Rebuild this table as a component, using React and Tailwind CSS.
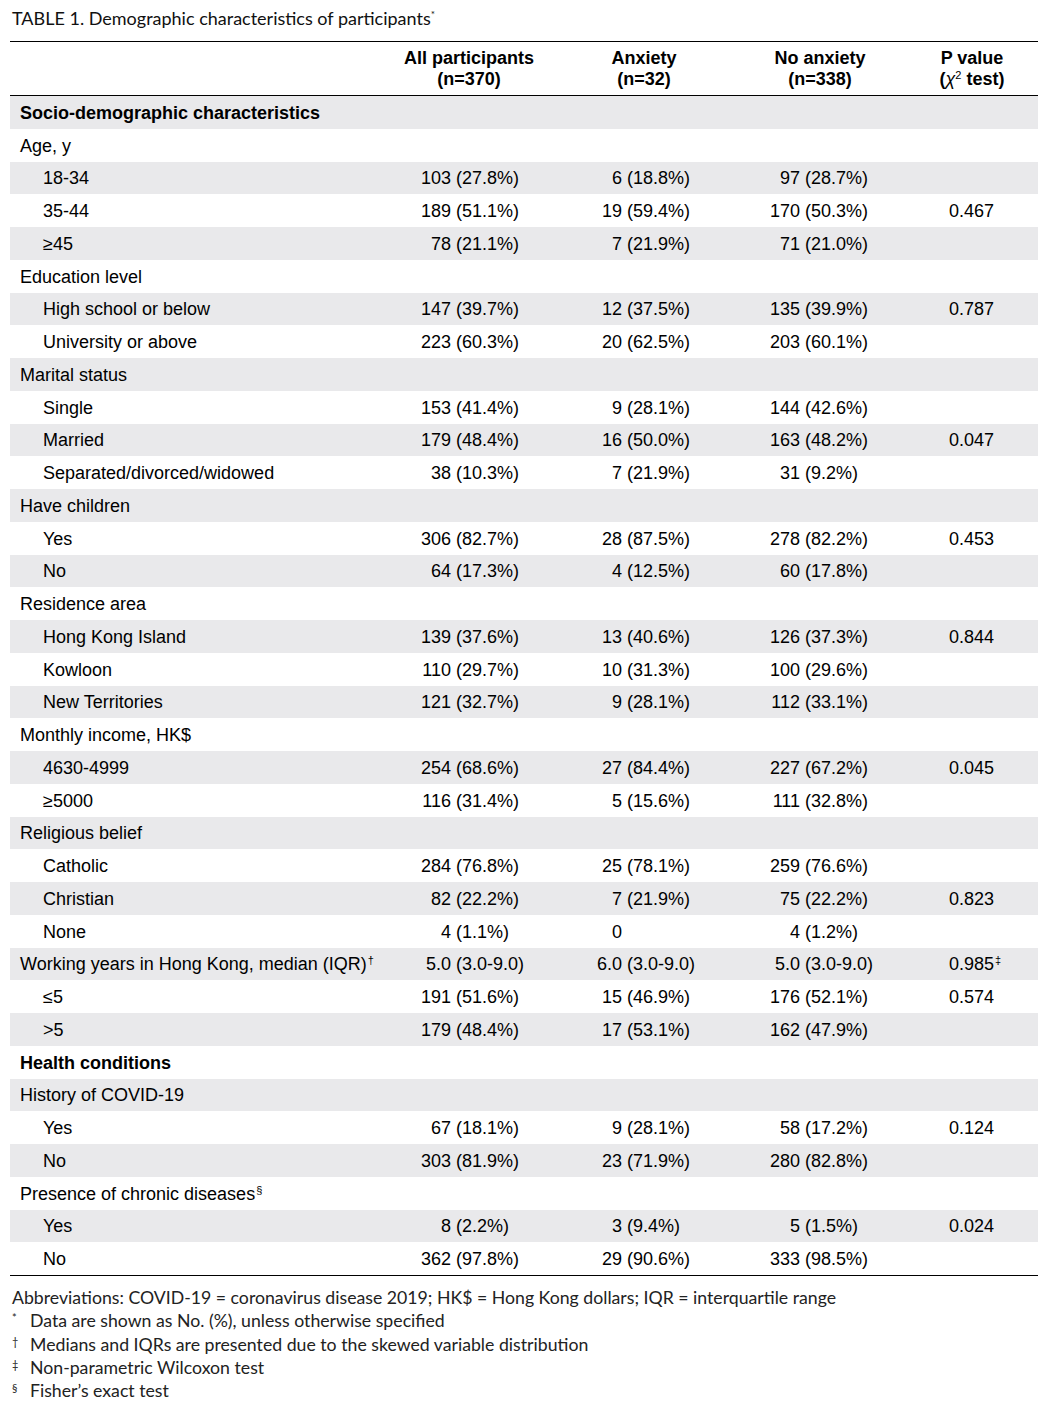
const ROWS = [
  ['Socio-demographic characteristics', 'head'],
  ['Age, y'],
  ['18-34', 'sub', '103 (27.8%)', '6 (18.8%)', '97 (28.7%)'],
  ['35-44', 'sub', '189 (51.1%)', '19 (59.4%)', '170 (50.3%)', '0.467'],
  ['≥45', 'sub', '78 (21.1%)', '7 (21.9%)', '71 (21.0%)'],
  ['Education level'],
  ['High school or below', 'sub', '147 (39.7%)', '12 (37.5%)', '135 (39.9%)', '0.787'],
  ['University or above', 'sub', '223 (60.3%)', '20 (62.5%)', '203 (60.1%)'],
  ['Marital status'],
  ['Single', 'sub', '153 (41.4%)', '9 (28.1%)', '144 (42.6%)'],
  ['Married', 'sub', '179 (48.4%)', '16 (50.0%)', '163 (48.2%)', '0.047'],
  ['Separated/divorced/widowed', 'sub', '38 (10.3%)', '7 (21.9%)', '31 (9.2%)'],
  ['Have children'],
  ['Yes', 'sub', '306 (82.7%)', '28 (87.5%)', '278 (82.2%)', '0.453'],
  ['No', 'sub', '64 (17.3%)', '4 (12.5%)', '60 (17.8%)'],
  ['Residence area'],
  ['Hong Kong Island', 'sub', '139 (37.6%)', '13 (40.6%)', '126 (37.3%)', '0.844'],
  ['Kowloon', 'sub', '110 (29.7%)', '10 (31.3%)', '100 (29.6%)'],
  ['New Territories', 'sub', '121 (32.7%)', '9 (28.1%)', '112 (33.1%)'],
  ['Monthly income, HK$'],
  ['4630-4999', 'sub', '254 (68.6%)', '27 (84.4%)', '227 (67.2%)', '0.045'],
  ['≥5000', 'sub', '116 (31.4%)', '5 (15.6%)', '111 (32.8%)'],
  ['Religious belief'],
  ['Catholic', 'sub', '284 (76.8%)', '25 (78.1%)', '259 (76.6%)'],
  ['Christian', 'sub', '82 (22.2%)', '7 (21.9%)', '75 (22.2%)', '0.823'],
  ['None', 'sub', '4 (1.1%)', '0', '4 (1.2%)'],
  ['Working years in Hong Kong, median (IQR)', 'cat', '5.0 (3.0-9.0)', '6.0 (3.0-9.0)', '5.0 (3.0-9.0)', '0.985', '†', '‡'],
  ['≤5', 'sub', '191 (51.6%)', '15 (46.9%)', '176 (52.1%)', '0.574'],
  ['>5', 'sub', '179 (48.4%)', '17 (53.1%)', '162 (47.9%)'],
  ['Health conditions', 'head'],
  ['History of COVID-19'],
  ['Yes', 'sub', '67 (18.1%)', '9 (28.1%)', '58 (17.2%)', '0.124'],
  ['No', 'sub', '303 (81.9%)', '23 (71.9%)', '280 (82.8%)'],
  ['Presence of chronic diseases', 'cat', null, null, null, null, '§'],
  ['Yes', 'sub', '8 (2.2%)', '3 (9.4%)', '5 (1.5%)', '0.024'],
  ['No', 'sub', '362 (97.8%)', '29 (90.6%)', '333 (98.5%)'],
];

const FOOTNOTES = [
  ['*', 'Data are shown as No. (%), unless otherwise specified'],
  ['†', 'Medians and IQRs are presented due to the skewed variable distribution'],
  ['‡', 'Non-parametric Wilcoxon test'],
  ['§', 'Fisher’s exact test'],
];

// count is right-aligned to a fixed edge, the bracket part follows it
function Value({ text, countW }) {
  if (!text) return null;
  const i = text.indexOf(' ');
  const count = i === -1 ? text : text.slice(0, i);
  const rest = i === -1 ? '' : text.slice(i);
  return (
    <div className="flex whitespace-pre">
      <span className="text-right shrink-0" style={{ width: countW }}>{count}</span>
      <span>{rest}</span>
    </div>
  );
}

function Mark({ children }) {
  return <sup className="text-[11px] ml-[1px] relative -top-[6px]">{children}</sup>;
}

function Row({ row, index }) {
  const [label, kind, all, anx, no, p, labelMark, pMark] = row;
  const grey = index % 2 === 0;
  return (
    <div className={`flex items-center h-[32.75px] pt-[2px] ${grey ? 'bg-[#e9e9eb]' : 'bg-white'}`}>
      <div className={`w-[380px] shrink-0 ${kind === 'sub' ? 'pl-[33px]' : 'pl-[10px]'} ${kind === 'head' ? 'font-bold' : ''}`}>
        {label}
        {labelMark && <Mark>{labelMark}</Mark>}
      </div>
      <div className="w-[158px] shrink-0"><Value text={all} countW={61} /></div>
      <div className="w-[192px] shrink-0"><Value text={anx} countW={74} /></div>
      <div className="w-[166px] shrink-0"><Value text={no} countW={60} /></div>
      <div className="w-[132px] shrink-0 pl-[43px]">
        {p}
        {pMark && <Mark>{pMark}</Mark>}
      </div>
    </div>
  );
}

export default function App() {
  return (
    <div className="w-[1063px] min-h-[1409px] bg-white text-black pt-[7px]">
      <div className="pl-[12px] text-[18px] leading-[22px] text-[#111]" style={{ fontFamily: 'Lato, "Open Sans", sans-serif' }}>
        TABLE 1. Demographic characteristics of participants<sup className="text-[10px] relative -top-[7px]">*</sup>
      </div>

      <div className="ml-[10px] w-[1028px] mt-[12px] text-[18px]" style={{ fontFamily: '"Liberation Sans", Arial, sans-serif' }}>
        <div className="flex items-center h-[55px] border-t border-b border-black font-bold leading-[21px] text-center">
          <div className="w-[380px] shrink-0" />
          <div className="w-[158px] shrink-0">All participants<br />(n=370)</div>
          <div className="w-[192px] shrink-0">Anxiety<br />(n=32)</div>
          <div className="w-[166px] shrink-0 pr-[6px]">No anxiety<br />(n=338)</div>
          <div className="w-[132px] shrink-0">
            P value<br />(<span className="font-normal italic">χ</span><sup className="text-[11px] font-normal relative -top-[6px]">2</sup> test)
          </div>
        </div>
        <div className="border-b border-black">
          {ROWS.map((row, i) => <Row key={i} row={row} index={i} />)}
        </div>
      </div>

      <div className="mt-[10px] pl-[12px] text-[17.7px] leading-[23.3px] text-[#222]" style={{ fontFamily: 'Lato, "Open Sans", sans-serif' }}>
        <div>Abbreviations: COVID-19 = coronavirus disease 2019; HK$ = Hong Kong dollars; IQR = interquartile range</div>
        {FOOTNOTES.map(([mark, text]) => (
          <div key={mark} className="flex">
            <span className="w-[18px] shrink-0 text-[11px] relative -top-[3px]">{mark}</span>
            <span>{text}</span>
          </div>
        ))}
      </div>
    </div>
  );
}
